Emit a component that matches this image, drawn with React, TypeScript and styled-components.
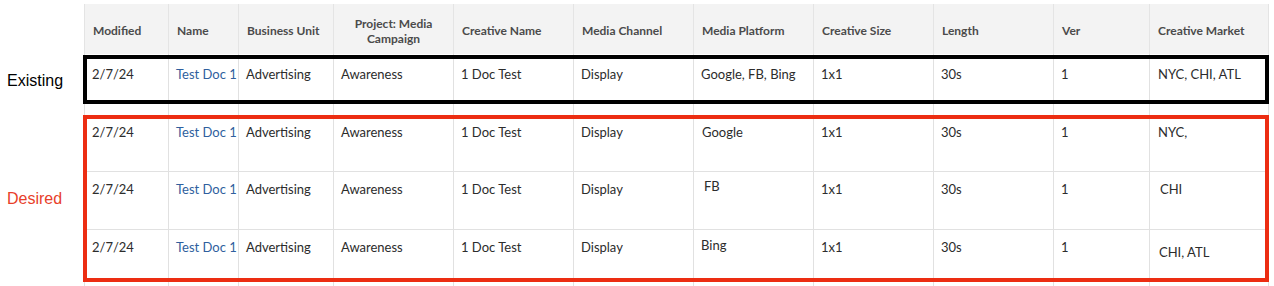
import React from 'react'
import styled, { createGlobalStyle } from 'styled-components'

const COLS = '84px 70px 95px 120px 120px 120px 120px 120px 120px 96px 120px'

const GlobalStyle = createGlobalStyle`
  html, body {
    margin: 0;
    padding: 0;
    background: #ffffff;
    overflow: hidden;
  }
  body {
    font-family: Lato, 'Open Sans', sans-serif;
  }
`

type Cell = { text: string; link?: boolean; dx?: number; dy?: number }

const headers = [
  'Modified',
  'Name',
  'Business Unit',
  'Project: Media Campaign',
  'Creative Name',
  'Media Channel',
  'Media Platform',
  'Creative Size',
  'Length',
  'Ver',
  'Creative Market',
]

const base = (platform: Cell, market: Cell): Cell[] => [
  { text: '2/7/24' },
  { text: 'Test Doc 1', link: true },
  { text: 'Advertising' },
  { text: 'Awareness' },
  { text: '1 Doc Test' },
  { text: 'Display' },
  platform,
  { text: '1x1' },
  { text: '30s' },
  { text: '1' },
  market,
]

const existing = base({ text: 'Google, FB, Bing' }, { text: 'NYC, CHI, ATL', dx: 1 })

const desired: Cell[][] = [
  base({ text: 'Google', dx: 1 }, { text: 'NYC,', dx: 1 }),
  base({ text: 'FB', dx: 3, dy: -3 }, { text: 'CHI', dx: 3 }),
  base({ text: 'Bing', dy: -2 }, { text: 'CHI, ATL', dx: 2, dy: 5 }),
]

export default function App(): JSX.Element {
  return (
    <Page>
      <GlobalStyle />
      <Section>
        <Label />
        <HeaderRow>
          {headers.map((h, i) => (
            <HeaderCell key={i} $center={i === 3}>
              {i === 3 ? (
                <>
                  Project: Media
                  <br />
                  Campaign
                </>
              ) : (
                h
              )}
            </HeaderCell>
          ))}
        </HeaderRow>
      </Section>

      <Section>
        <Label $top={18}>Existing</Label>
        <Group $color="#000000" $insetTop={1} $insetBottom={11} $width={4}>
          <Row $height={61}>
            {existing.map((c, i) => (
              <BodyCell key={i} $padTop={11} $dx={c.dx ?? 0} $dy={c.dy ?? 0} $link={c.link}>
                {c.text}
              </BodyCell>
            ))}
          </Row>
        </Group>
      </Section>

      <Section>
        <Label $top={75} $red>
          Desired
        </Label>
        <Group $color="#ec2d12" $insetTop={0} $insetBottom={6} $width={4}>
          {desired.map((row, r) => (
            <Row key={r} $height={r === 0 ? 57 : 58} $line={r < 2}>
              {row.map((c, i) => (
                <BodyCell key={i} $padTop={8} $dx={c.dx ?? 0} $dy={c.dy ?? 0} $link={c.link}>
                  {c.text}
                </BodyCell>
              ))}
            </Row>
          ))}
        </Group>
      </Section>
    </Page>
  )
}

const Page = styled.div`
  padding-top: 4px;
  width: 1274px;
`

const Section = styled.div`
  display: grid;
  grid-template-columns: 84px 1185px;
`

const Label = styled.div<{ $top?: number; $red?: boolean }>`
  padding: ${(p) => p.$top ?? 0}px 0 0 7px;
  font-family: 'Liberation Sans', Arial, sans-serif;
  font-size: 16px;
  line-height: 18px;
  color: ${(p) => (p.$red ? '#e8402a' : '#000000')};
`

const HeaderRow = styled.div`
  display: grid;
  grid-template-columns: ${COLS};
  height: 50px;
  background: #f3f3f3;
`

const HeaderCell = styled.div<{ $center?: boolean }>`
  box-sizing: border-box;
  border-left: 1px solid #e4e4e4;
  display: flex;
  align-items: center;
  justify-content: ${(p) => (p.$center ? 'center' : 'flex-start')};
  text-align: ${(p) => (p.$center ? 'center' : 'left')};
  padding: 3px 8px 0 8px;
  font-size: 12px;
  font-weight: 700;
  line-height: 15px;
  color: #4b4b4b;
  &:last-child {
    border-right: 1px solid #e4e4e4;
  }
`

const Group = styled.div<{ $color: string; $insetTop: number; $insetBottom: number; $width: number }>`
  position: relative;
  &::after {
    content: '';
    position: absolute;
    left: -1px;
    right: 0;
    top: ${(p) => p.$insetTop}px;
    bottom: ${(p) => p.$insetBottom}px;
    border: ${(p) => p.$width}px solid ${(p) => p.$color};
    pointer-events: none;
  }
`

const Row = styled.div<{ $height: number; $line?: boolean }>`
  display: grid;
  grid-template-columns: ${COLS};
  height: ${(p) => p.$height}px;
  box-sizing: border-box;
  border-bottom: ${(p) => (p.$line ? '1px solid #e1e1e1' : 'none')};
`

const BodyCell = styled.div<{ $padTop: number; $dx: number; $dy: number; $link?: boolean }>`
  box-sizing: border-box;
  border-left: 1px solid #e1e1e1;
  padding: ${(p) => p.$padTop + p.$dy}px 4px 0 ${(p) => 7 + p.$dx}px;
  font-size: 13px;
  line-height: 18px;
  white-space: nowrap;
  color: ${(p) => (p.$link ? '#2f5f9e' : '#2c2c2c')};
  &:last-child {
    border-right: 1px solid #e1e1e1;
  }
`
